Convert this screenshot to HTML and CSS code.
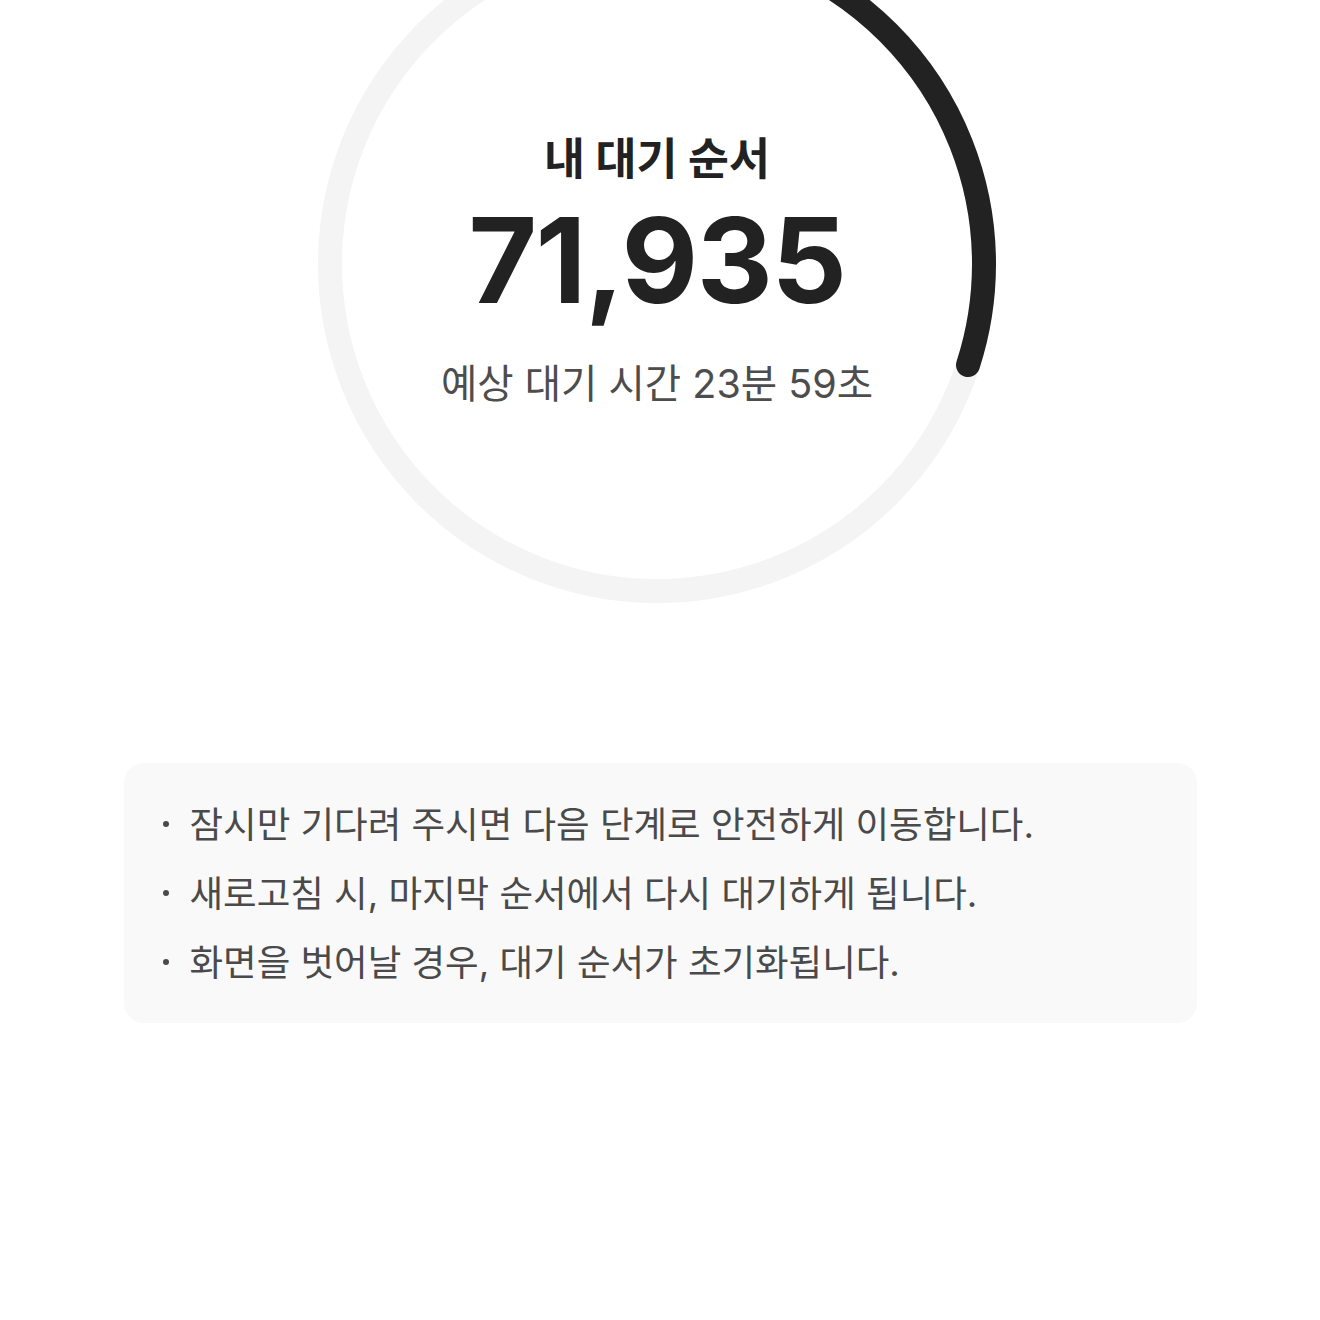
FILE: index.html
```html
<!DOCTYPE html>
<html lang="ko">
<head>
<meta charset="utf-8">
<title>대기열</title>
<link rel="stylesheet" href="styles.css">
</head>
<body>
<main class="page">
  <section class="queue">
    <div class="ring">
      <svg class="ring-svg" viewBox="0 0 678 678" width="678" height="678" aria-hidden="true">
        <circle class="ring-track" cx="339" cy="339" r="327"></circle>
        <circle class="ring-progress" cx="339" cy="339" r="327" pathLength="100" style="stroke-dasharray: 30 100"></circle>
      </svg>
      <div class="ring-content">
        <p class="queue-label">내 대기 순서</p>
        <p class="queue-number">71,935</p>
        <p class="queue-eta">예상 대기 시간 23분 59초</p>
      </div>
    </div>
  </section>

  <section class="notice">
    <ul class="notice-list">
      <li>잠시만 기다려 주시면 다음 단계로 안전하게 이동합니다.</li>
      <li>새로고침 시, 마지막 순서에서 다시 대기하게 됩니다.</li>
      <li>화면을 벗어날 경우, 대기 순서가 초기화됩니다.</li>
    </ul>
  </section>
</main>
</body>
</html>
```

FILE: styles.css
```css
* {
  box-sizing: border-box;
}

html, body {
  margin: 0;
  padding: 0;
  background: #ffffff;
}

body {
  font-family: "Inter", "Noto Sans CJK KR", sans-serif;
  color: #222222;
}

.page {
  width: 1320px;
  margin: 0 auto;
}

/* progress ring */
.queue {
  display: flex;
  justify-content: center;
  padding-right: 6px;
  margin-top: -75px;
}

.ring {
  display: grid;
  width: 678px;
  height: 678px;
}

.ring-svg,
.ring-content {
  grid-area: 1 / 1;
}

.ring-svg {
  transform: rotate(-90deg);
}

.ring-track,
.ring-progress {
  fill: none;
  stroke-width: 24;
}

.ring-track {
  stroke: #f4f4f4;
}

.ring-progress {
  stroke: #222222;
  stroke-linecap: round;
}

.ring-content {
  display: flex;
  flex-direction: column;
  align-items: center;
  padding-top: 208px;
}

.ring-content p {
  margin: 0;
}

.queue-label {
  font-size: 44.5px;
  line-height: 52px;
  font-weight: 700;
  color: #222222;
}

.queue-number {
  margin-top: 16px !important;
  font-size: 118px;
  line-height: 118px;
  font-weight: 700;
  letter-spacing: -1.4px;
  color: #222222;
}

.queue-eta {
  margin-top: 41px !important;
  font-size: 39.5px;
  line-height: 48px;
  font-weight: 400;
  color: #4d4d4d;
}

/* notice box */
.notice {
  width: 1073px;
  margin: 160px auto 0;
  background: #f9f9f9;
  border-radius: 20px;
  padding: 28px 40px 25px;
}

.notice-list {
  list-style: none;
  margin: 0;
  padding: 0;
}

.notice-list li {
  position: relative;
  padding-left: 26px;
  font-size: 36.5px;
  line-height: 69px;
  color: #4a4a4a;
}

.notice-list li::before {
  content: "";
  position: absolute;
  left: -1px;
  top: 30px;
  width: 6px;
  height: 6px;
  border-radius: 50%;
  background: #4a4a4a;
}
```
